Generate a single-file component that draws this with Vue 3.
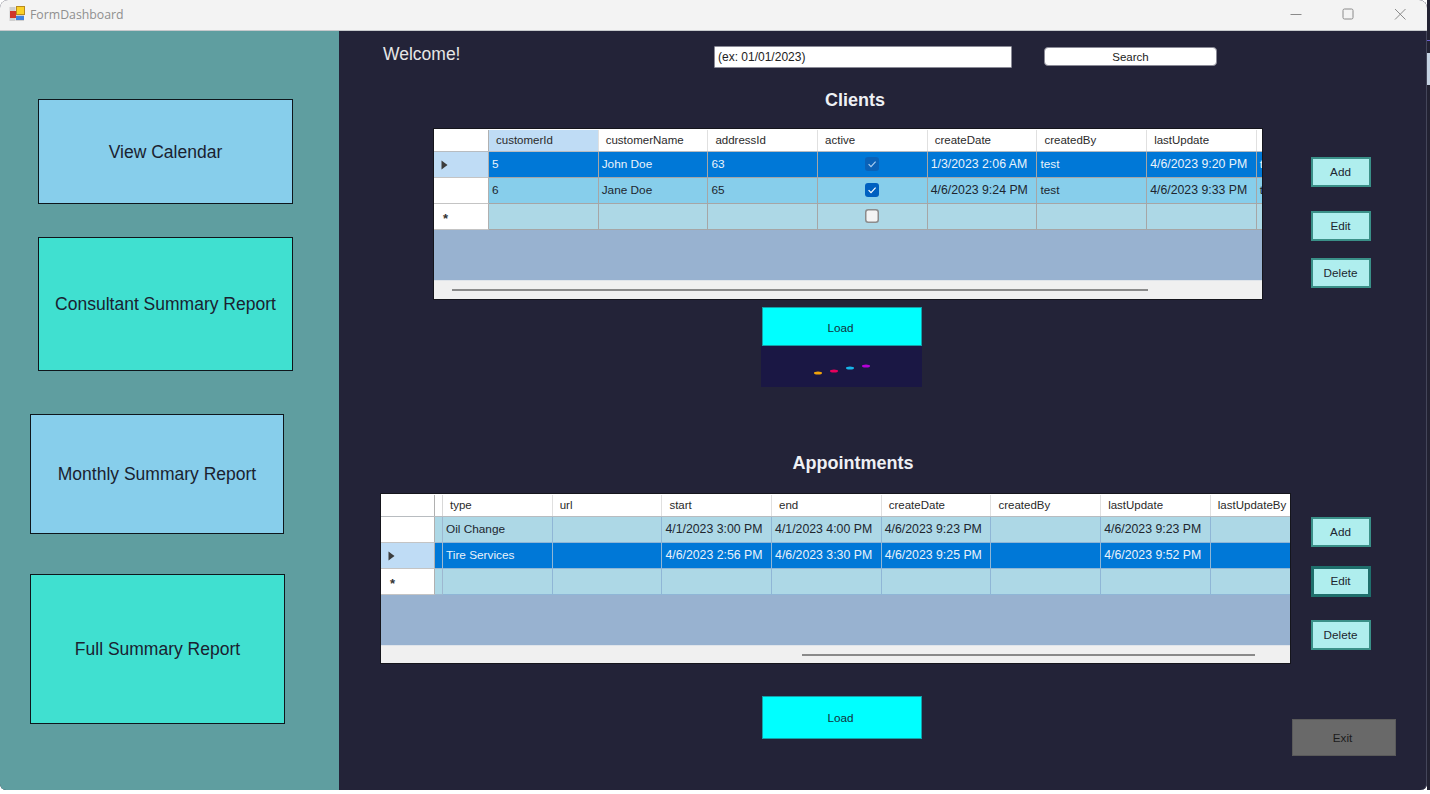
<script setup>
const clientCols = ['customerId', 'customerName', 'addressId', 'active', 'createDate', 'createdBy', 'lastUpdate', 'lastUpdateBy']
const apptCols = ['type', 'url', 'start', 'end', 'createDate', 'createdBy', 'lastUpdate', 'lastUpdateBy']

const grids = [
  {
    key: 'clients',
    title: 'Clients',
    cols: clientCols,
    hot: 0,
    rows: [
      { mark: 'arrow', kind: 'sel', cells: ['5', 'John Doe', '63', true, '1/3/2023 2:06 AM', 'test', '4/6/2023 9:20 PM', 'test'] },
      { mark: '', kind: 'alt', cells: ['6', 'Jane Doe', '65', true, '4/6/2023 9:24 PM', 'test', '4/6/2023 9:33 PM', 'test'] },
      { mark: 'new', kind: 'plain', cells: ['', '', '', false, '', '', '', ''] }
    ],
    actions: ['Add', 'Edit', 'Delete']
  },
  {
    key: 'appts',
    title: 'Appointments',
    cols: apptCols,
    hot: -1,
    rows: [
      { mark: '', kind: 'plain', cells: ['Oil Change', '', '4/1/2023 3:00 PM', '4/1/2023 4:00 PM', '4/6/2023 9:23 PM', '', '4/6/2023 9:23 PM', ''] },
      { mark: 'arrow', kind: 'sel', cells: ['Tire Services', '', '4/6/2023 2:56 PM', '4/6/2023 3:30 PM', '4/6/2023 9:25 PM', '', '4/6/2023 9:52 PM', ''] },
      { mark: 'new', kind: 'plain', cells: ['', '', '', '', '', '', '', ''] }
    ],
    actions: ['Add', 'Edit', 'Delete']
  }
]

const navButtons = [
  { label: 'View Calendar', cls: 'nav-a' },
  { label: 'Consultant Summary Report', cls: 'nav-b' },
  { label: 'Monthly Summary Report', cls: 'nav-c' },
  { label: 'Full Summary Report', cls: 'nav-d' }
]

function isDate(v) {
  return typeof v === 'string' && v.includes('/')
}
</script>

<template>
  <div class="screen">
    <div class="window">
      <header class="titlebar">
        <svg class="app-icon" width="16" height="16" viewBox="0 0 16 16">
          <rect x="0.5" y="1" width="6" height="14" fill="#cfcfcf" />
          <rect x="1" y="5" width="6" height="7" fill="#d0352b" />
          <rect x="7" y="0" width="9" height="9" fill="#b98a1e" />
          <rect x="8" y="1" width="7" height="7" fill="#fbd128" />
          <rect x="7" y="9" width="8" height="6" fill="#cfcfcf" />
          <rect x="7" y="10" width="8" height="4" fill="#3f82e0" />
        </svg>
        <span class="app-name">FormDashboard</span>
        <div class="win-controls">
          <svg width="12" height="12" viewBox="0 0 12 12"><path d="M0.5 6.5h11" stroke="#8a8a8a" fill="none" /></svg>
          <svg width="12" height="12" viewBox="0 0 12 12"><rect x="1" y="1" width="10" height="10" rx="1.5" stroke="#8a8a8a" fill="none" /></svg>
          <svg width="12" height="12" viewBox="0 0 12 12"><path d="M1 1l10.5 10.5M11.5 1L1 11.5" stroke="#8a8a8a" fill="none" /></svg>
        </div>
      </header>

      <div class="body">
        <aside class="sidebar">
          <button v-for="b in navButtons" :key="b.label" class="nav-btn" :class="b.cls">{{ b.label }}</button>
        </aside>

        <main class="main">
          <div class="topbar">
            <span class="welcome">Welcome!</span>
            <input class="date-input" type="text" value="(ex: 01/01/2023)" />
            <button class="search-btn">Search</button>
          </div>

          <section v-for="g in grids" :key="g.key" :class="g.key">
            <h2 class="section-title">{{ g.title }}</h2>
            <div class="grid-row">
              <div class="grid">
                <div class="row head">
                  <div class="row-head"></div>
                  <div v-if="g.key === 'appts'" class="gutter"></div>
                  <div v-for="(c, i) in g.cols" :key="c" class="cell" :class="{ hot: i === g.hot }">{{ c }}</div>
                </div>
                <div v-for="(r, ri) in g.rows" :key="ri" class="row" :class="r.kind">
                  <div class="row-head" :class="{ current: r.mark === 'arrow' }">
                    <svg v-if="r.mark === 'arrow'" width="7" height="10" viewBox="0 0 7 10"><path d="M0.5 0.5L6.5 5L0.5 9.5Z" fill="#3c3c3c" /></svg>
                    <span v-else-if="r.mark === 'new'" class="new-mark">*</span>
                  </div>
                  <div v-if="g.key === 'appts'" class="gutter"></div>
                  <div v-for="(v, ci) in r.cells" :key="ci" class="cell" :class="{ check: typeof v === 'boolean', date: isDate(v) }">
                    <template v-if="typeof v === 'boolean'">
                      <svg width="14" height="14" viewBox="0 0 14 14">
                        <rect v-if="v" x="0" y="0" width="14" height="14" rx="3" :fill="r.kind === 'sel' ? '#0a62b8' : '#0060c0'" />
                        <rect v-else x="0.75" y="0.75" width="12.5" height="12.5" rx="2.5" fill="#f4f4f4" stroke="#8c8c8c" stroke-width="1.5" />
                        <path v-if="v" d="M3.6 7.2L6 9.6L10.6 4.6" fill="none" :stroke="r.kind === 'sel' ? '#a9cdf0' : '#fff'" stroke-width="1.2" />
                      </svg>
                    </template>
                    <template v-else>{{ v }}</template>
                  </div>
                </div>
                <div class="grid-empty"></div>
                <div class="scrollbar"><div class="thumb"></div></div>
              </div>
              <div class="actions">
                <button v-for="a in g.actions" :key="a" class="action-btn" :class="'act-' + a.toLowerCase()">{{ a }}</button>
              </div>
            </div>
            <div class="load-row">
              <div class="load-wrap">
                <button class="load-btn">Load</button>
                <div v-if="g.key === 'clients'" class="spinner">
                  <svg width="161" height="41" viewBox="0 0 161 41">
                    <ellipse cx="57" cy="27" rx="4" ry="1.5" fill="#f0a30a" />
                    <ellipse cx="73" cy="25" rx="4" ry="1.5" fill="#e6005c" />
                    <ellipse cx="89" cy="22" rx="4" ry="1.5" fill="#16b5e8" />
                    <ellipse cx="105" cy="20" rx="4" ry="1.5" fill="#b400d8" />
                  </svg>
                </div>
              </div>
              <button v-if="g.key === 'appts'" class="exit-btn">Exit</button>
            </div>
          </section>
        </main>
      </div>
    </div>
    <div class="desk-strip">
      <div class="strip-line"></div>
      <div class="strip-thumb"></div>
    </div>
  </div>
</template>

<style>
html, body { margin: 0; background: #fff; overflow: hidden; }
</style>

<style scoped>
.screen {
  width: 1430px;
  height: 790px;
  display: flex;
  font-family: "Liberation Sans", Arial, sans-serif;
  overflow: hidden;
  background: #fff;
}

.window {
  width: 1427px;
  height: 790px;
  display: flex;
  flex-direction: column;
  border-radius: 8px 8px 6px 6px;
  overflow: hidden;
  background: #232338;
  box-shadow: inset -1px 0 0 #44465a;
}

.desk-strip {
  width: 3px;
  background: #222232;
}
.strip-line {
  height: 1px;
  margin-top: 40px;
  background: #6a5cd0;
}
.strip-thumb {
  height: 32px;
  margin-top: 12px;
  background: #c4d2e2;
}

.titlebar {
  height: 31px;
  flex: none;
  display: flex;
  align-items: center;
  background: #f3f3f3;
  border-bottom: 1px solid #c6c9cc;
  box-sizing: border-box;
}
.app-icon { margin-left: 9px; margin-top: -3px; }
.app-name {
  margin-left: 5px;
  margin-top: -2px;
  font-family: "Open Sans", sans-serif;
  font-size: 12.3px;
  color: #8f8f8f;
}
.win-controls {
  margin-left: auto;
  margin-right: 21px;
  display: flex;
  gap: 40px;
  margin-top: -3px;
}

.body { flex: 1; display: flex; min-height: 0; }

.sidebar {
  width: 339px;
  flex: none;
  padding-top: 68px;
  box-sizing: border-box;
  background: #5f9ea0;
  display: flex;
  flex-direction: column;
  align-items: flex-start;
}
.nav-btn {
  font-family: inherit;
  font-size: 17.5px;
  color: #1a2230;
  border: 1px solid #0e161c;
  padding: 0;
  box-sizing: border-box;
}
.nav-a { margin-left: 38px; width: 255px; height: 105px; padding-top: 1px; background: #87ceeb; }
.nav-b { margin-left: 38px; margin-top: 33px; width: 255px; height: 134px; background: #40e0d0; }
.nav-c { margin-left: 30px; margin-top: 43px; width: 254px; height: 120px; background: #87ceeb; }
.nav-d { margin-left: 30px; margin-top: 40px; width: 255px; height: 150px; background: #40e0d0; }

.main { flex: 1; min-width: 0; }

.topbar {
  display: flex;
  align-items: flex-start;
  padding-top: 15px;
  margin-left: 44px;
}
.welcome {
  width: 331px;
  flex: none;
  font-size: 17.5px;
  line-height: 20px;
  color: #e6e6e6;
  margin-top: -2px;
}
.date-input {
  width: 298px;
  height: 22px;
  box-sizing: border-box;
  border: 1px solid #8a8a96;
  border-radius: 1px;
  padding: 0 3px;
  font-family: inherit;
  font-size: 12px;
  color: #222;
  background: #fff;
  outline: none;
}
.search-btn {
  margin-left: 32px;
  margin-top: 1px;
  width: 173px;
  height: 19px;
  padding: 0;
  border: 1px solid #8a8a96;
  border-radius: 4px;
  background: #fff;
  font-family: inherit;
  font-size: 11.5px;
  color: #222;
}

.section-title {
  margin: 0;
  font-size: 18px;
  line-height: 22px;
  font-weight: bold;
  color: #eef0f4;
  text-align: center;
}
.clients .section-title { margin-top: 21px; width: 1032px; }
.appts .section-title { margin-top: 65px; width: 1028px; }

.grid-row { display: flex; align-items: flex-start; }
.clients .grid-row { margin-top: 17px; margin-left: 94px; }
.appts .grid-row { margin-top: 19px; margin-left: 41px; }

.grid {
  display: flex;
  flex-direction: column;
  box-sizing: border-box;
  border: 1px solid #15151c;
  background: #98b2d0;
  overflow: hidden;
}
.clients .grid { width: 830px; height: 172px; }
.appts .grid { width: 911px; height: 171px; }

.row {
  display: flex;
  flex: none;
  height: 26px;
  font-size: 11.8px;
  line-height: 25px;
  color: #20262e;
}
.row.head {
  height: 23px;
  padding-top: 1px;
  box-sizing: border-box;
  background: #fff;
  border-bottom: 1px solid #b8bcc0;
  font-size: 11.5px;
  line-height: 21px;
  color: #2a2a2a;
}
.row-head {
  flex: none;
  width: 55px;
  box-sizing: border-box;
  background: #fff;
  border-right: 1px solid #b0b0b0;
  border-bottom: 1px solid #c4c4c4;
  display: flex;
  align-items: center;
  padding-left: 7px;
}
.row.head .row-head { border-bottom: 0; }
.appts .row-head { width: 54px; }
.row-head.current { background: #bfdcf5; }
.new-mark {
  font-size: 13px;
  font-weight: bold;
  line-height: 14px;
  margin-top: 5px;
  margin-left: 2px;
  color: #333;
}
.gutter {
  flex: none;
  width: 8px;
  box-sizing: border-box;
  border-right: 1px solid #9db8d0;
  border-bottom: 1px solid #9db8d0;
}
.row.head .gutter { border-right-color: #d8d8d8; border-bottom: 0; }
.plain .gutter { background: #add8e6; }
.sel .gutter { background: #0078d7; }

.cell {
  flex: 0 0 109.7px;
  box-sizing: border-box;
  padding: 0 3px;
  border-right: 1px solid #a6a6a6;
  border-bottom: 1px solid #a6a6a6;
  white-space: nowrap;
  overflow: hidden;
}
.cell.date { font-size: 12.3px; }
.appts .cell { border-color: #8fb6d6; }
.row.head .cell {
  padding-left: 7px;
  border-bottom: 0;
  border-right-color: #e0e0e0;
}
.row.head .cell.hot { background: #bfdcf5; }
.sel .cell { background: #0078d7; color: #eaf3fb; }
.alt .cell { background: #87ceeb; }
.plain .cell { background: #add8e6; }
.cell.check {
  display: flex;
  align-items: center;
  justify-content: center;
  padding-bottom: 1px;
}

.grid-empty { flex: 1; }
.scrollbar {
  flex: none;
  box-sizing: border-box;
  background: #f0f0f0;
  border-top: 1px solid #dfe4ea;
  padding-top: 8px;
}
.clients .scrollbar { height: 19px; }
.appts .scrollbar { height: 18px; }
.thumb { height: 2px; background: #8a8a8a; }
.clients .thumb { width: 696px; margin-left: 18px; }
.appts .thumb { width: 453px; margin-left: 421px; }

.actions { display: flex; flex-direction: column; flex: none; align-items: flex-start; }
.clients .actions { margin-left: 48px; margin-top: 29px; }
.appts .actions { margin-left: 20px; margin-top: 24px; }
.action-btn {
  width: 60px;
  height: 30px;
  padding: 0 1px 2px 0;
  box-sizing: border-box;
  border: 2px solid #3a9088;
  background: #afeeee;
  font-family: inherit;
  font-size: 11.7px;
  color: #20262e;
}
.clients .act-edit { margin-top: 24px; }
.clients .act-delete { margin-top: 17px; }
.appts .act-edit { margin-top: 19px; height: 31px; border: 3px solid #1f6f6c; }
.appts .act-delete { margin-top: 23px; }

.load-row { display: flex; align-items: flex-start; margin-left: 422px; }
.clients .load-row { margin-top: 7px; }
.appts .load-row { margin-top: 32px; }
.load-wrap { display: flex; flex-direction: column; width: 161px; flex: none; }
.load-btn {
  margin-left: 1px;
  width: 160px;
  padding: 2px 3px 0 0;
  box-sizing: border-box;
  border: 1px solid #14a0a8;
  background: #00ffff;
  font-family: inherit;
  font-size: 11.7px;
  color: #12303a;
}
.clients .load-btn { height: 39px; }
.appts .load-btn { height: 43px; padding-top: 0; }
.spinner { height: 41px; background: #1a1744; }
.spinner svg { display: block; }
.exit-btn {
  margin-left: 370px;
  margin-top: 23px;
  width: 104px;
  height: 37px;
  padding: 0 3px 0 0;
  box-sizing: border-box;
  border: 1px solid #5a5a5a;
  background: #696969;
  font-family: inherit;
  font-size: 11.7px;
  color: #1c1c1c;
}
</style>
